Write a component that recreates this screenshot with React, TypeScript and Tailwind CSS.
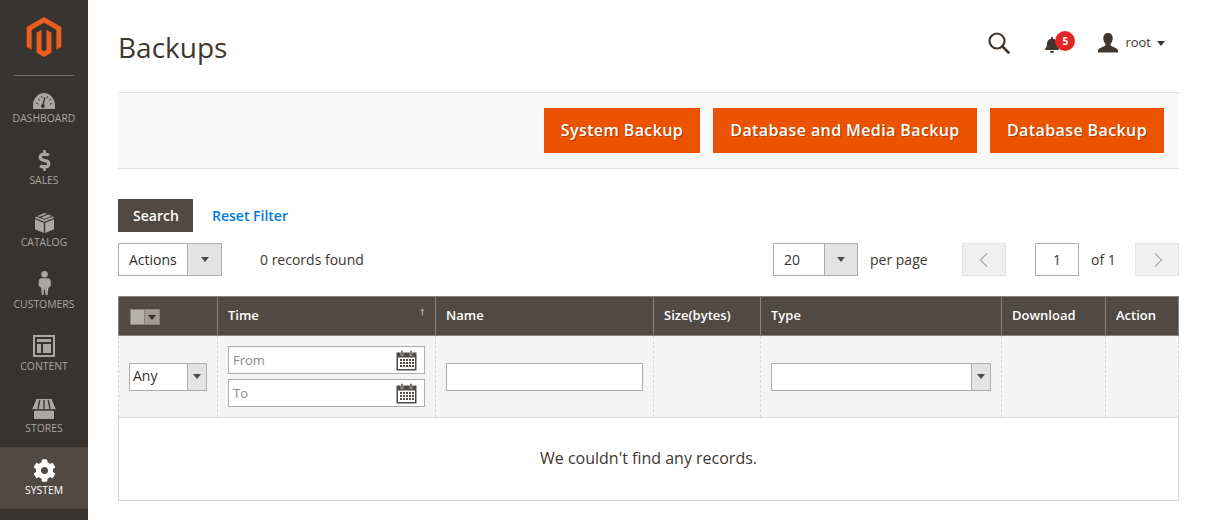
import type { ReactNode } from "react";
import { FaBell, FaCog, FaDollarSign } from "react-icons/fa";
import { SiMagento } from "react-icons/si";

const DashboardIcon = () => (
  <svg width="22" height="16" viewBox="0 0 24 16" fill="currentColor" preserveAspectRatio="none">
    <path fillRule="evenodd" d="M12 0C5.400 0 0 5.500 0 12.500V16h24v-3.500C24 5.500 18.600 0 12 0zM13.600 4.500l-1.700 7a1.900 1.900 0 1 1-1.600-.3l1.900-7z" />
    <g stroke="#373330" strokeWidth="1" strokeLinecap="round">
      <path d="M4 10.500l1.500.4M5.900 6l1.200 1M9.500 3.300l.5 1.400M15.800 3.600l-.6 1.300M19.200 6.400l-1.200 1M20.300 10.600l-1.500.4" />
    </g>
  </svg>
);

const CatalogIcon = () => (
  <svg width="19" height="20" viewBox="0 0 20 21" fill="currentColor">
    <path d="M0 6.600l9.300 3.600V21L0 17.100zM20 6.600l-9.300 3.600V21l9.300-3.900z" />
    <path d="M10 0l2.600 1-7.600 3-2.800-1zM14 1.600l3.800 1.500-7.800 3-3.600-1.400zM19 3.600L10 7.200 1 3.600l-1 1.600 10 4 10-4z" />
  </svg>
);

const CustomersIcon = () => (
  <svg width="13" height="24" viewBox="0 0 13 24" fill="currentColor">
    <circle cx="6.500" cy="3.300" r="3.300" />
    <path d="M3.400 7.200h6.200c1.900 0 3 1.200 3.100 3l.3 4.300-1.900 1.700-.9 1.300-.5 6.500H7.500l-.5-5.500H6L5.500 24H3.800l-.5-6.500-.9-1.300L.5 14.500l.3-4.300c.1-1.800 1.200-3 2.600-3z" />
  </svg>
);

const ContentIcon = () => (
  <svg width="22" height="22" viewBox="0 0 22 22" fill="currentColor">
    <path fillRule="evenodd" d="M0 0h22v22H0zM2 2v18h18V2z" />
    <path d="M4 4h14v3H4zM4 9h4v9H4zM10 9h8v9h-8z" />
  </svg>
);

const StoresIcon = () => (
  <svg width="24" height="20" viewBox="0 0 24 20" fill="currentColor">
    <path d="M4.500 0h15L24 10.500H0zM2 11.500h20V20H2z" />
    <path d="M7.800 1L6 10M12 1v9M16.200 1L18 10" stroke="#373330" strokeWidth="1.300" />
    <path d="M0 10.800h24" stroke="#373330" strokeWidth="1" />
  </svg>
);

const UserIcon = () => (
  <svg width="20" height="20" viewBox="0 0 20 20" fill="#41362f" className="mr-[7px]">
    <path d="M10 0c3 0 4.700 2.200 4.700 5.300 0 2.200-.8 4.300-2.100 5.400v1.500c.6 1.400 6.400 2.400 7.400 5.100V19.500H0V17.300c1-2.700 6.800-3.700 7.400-5.100v-1.500C6.100 9.600 5.300 7.500 5.300 5.300 5.300 2.200 7 0 10 0z" />
  </svg>
);

const navItems: { label: string; icon: ReactNode; active?: boolean }[] = [
  { label: "DASHBOARD", icon: <DashboardIcon /> },
  { label: "SALES", icon: <FaDollarSign size={21} /> },
  { label: "CATALOG", icon: <CatalogIcon /> },
  { label: "CUSTOMERS", icon: <CustomersIcon /> },
  { label: "CONTENT", icon: <ContentIcon /> },
  { label: "STORES", icon: <StoresIcon /> },
  { label: "SYSTEM", icon: <FaCog size={23} className="mb-[-1px]" />, active: true },
];

const Caret = ({ className = "border-t-[#514943]" }: { className?: string }) => (
  <span className={`h-0 w-0 border-x-[4px] border-t-[5px] border-x-transparent ${className}`} />
);

const CalendarIcon = () => (
  <svg width="21" height="21" viewBox="0 0 21 21" className="absolute right-[7px] top-[3px]">
    <rect x="0.500" y="2.500" width="20" height="18" fill="#514943" />
    <rect x="2" y="7.500" width="17" height="11.500" fill="#fff" />
    <rect x="5" y="0.500" width="2" height="5" fill="#514943" stroke="#fff" strokeWidth="0.500" />
    <rect x="14" y="0.500" width="2" height="5" fill="#514943" stroke="#fff" strokeWidth="0.500" />
    <g fill="#514943">
      {[9, 12, 15].map((y) =>
        [4, 7, 10, 13, 16].map((x) => <rect key={`${x}-${y}`} x={x} y={y} width="2" height="2" />),
      )}
    </g>
  </svg>
);

const DateField = ({ placeholder }: { placeholder: string }) => (
  <div className="relative flex h-[28px] w-[197px] items-center border border-[#adadad] bg-white pl-[4px] pt-[2px] text-[13px] text-[#8a8a8a]">
    {placeholder}
    <CalendarIcon />
  </div>
);

const Select = ({ label, width, arrow, height, pad }: { label: string; width: string; arrow: string; height: string; pad: string }) => (
  <div className={`flex border border-[#adadad] bg-white text-[14px] text-[#303030] ${width} ${height}`}>
    <span className={`flex flex-1 items-center ${pad}`}>{label}</span>
    <span className={`flex items-center justify-center border-l border-[#adadad] bg-[#e3e3e3] ${arrow}`}>
      <Caret />
    </span>
  </div>
);

const OrangeButton = ({ children, width }: { children: ReactNode; width: string }) => (
  <button className={`h-[45px] bg-[#eb5202] pb-[2px] text-[16px] font-semibold tracking-[0.4px] text-white [text-shadow:1px_1px_0_rgba(0,0,0,0.25)] ${width}`}>
    {children}
  </button>
);

const headers = ["Time", "Name", "Size(bytes)", "Type", "Download", "Action"];

export default function App() {
  return (
    <div className="flex h-[520px] w-[1206px] overflow-hidden bg-white font-['Open_Sans',sans-serif] text-[#303030]">
      <aside className="flex w-[88px] shrink-0 flex-col bg-[#373330]">
        <div className="flex h-[75px] justify-center pt-[17px] text-[#eb5e20]">
          <SiMagento size={40} />
        </div>
        <div className="mx-[14px] -mb-px h-px bg-[#736e69]" />
        <nav className="flex flex-col">
          {navItems.map((item) => (
            <div
              key={item.label}
              className={`flex h-[62px] flex-col items-center ${item.active ? "bg-[#514943] text-white" : "text-[#aaa6a0]"}`}
            >
              <div className="flex h-[36px] items-end justify-center pb-[2px]">{item.icon}</div>
              <span className="text-[10.4px] leading-[14px]">{item.label}</span>
            </div>
          ))}
        </nav>
      </aside>

      <main className="w-[1091px] pl-[30px]">
        <header className="flex h-[92px] items-start justify-between pt-[26px]">
          <h1 className="text-[28px] font-normal leading-[42px] text-[#41362f]">Backups</h1>
          <div className="flex items-center pr-[14px] pt-[6px] text-[#41362f]">
            <svg width="22" height="22" viewBox="0 0 22 22" fill="none" stroke="#41362f" strokeWidth="2.200" className="mr-[34px]">
              <circle cx="9" cy="9" r="7.500" />
              <path d="M14.500 14.500l6 6" strokeLinecap="round" strokeWidth="2.600" />
            </svg>
            <div className="relative mr-[33px] h-[22px] w-[21px]">
              <FaBell size={16} className="absolute left-0 top-[5px]" />
              <span className="absolute left-[11px] top-[-1px] flex h-[20px] w-[20px] items-center justify-center rounded-full bg-[#e22626] text-[10px] font-bold text-white">
                5
              </span>
            </div>
            <UserIcon />
            <span className="mr-[6px] text-[13px]">root</span>
            <Caret className="border-t-[#41362f]" />
          </div>
        </header>

        <div className="flex h-[77px] items-center justify-end gap-[13px] border-y border-[#e3e3e3] bg-[#f8f8f8] pr-[15px]">
          <OrangeButton width="w-[156px]">System Backup</OrangeButton>
          <OrangeButton width="w-[264px]">Database and Media Backup</OrangeButton>
          <OrangeButton width="w-[174px]">Database Backup</OrangeButton>
        </div>

        <div className="mt-[30px] flex h-[33px] items-center gap-[19px]">
          <button className="h-[33px] w-[75px] bg-[#514943] pl-[1px] text-[14px] font-semibold text-white">Search</button>
          <span className="text-[14px] font-semibold text-[#007bdb]">Reset Filter</span>
        </div>

        <div className="mt-[11px] flex h-[33px] items-center text-[14px] text-[#41362f]">
          <Select label="Actions" width="w-[104px]" height="h-[33px]" arrow="w-[34px]" pad="pl-[10px]" />
          <span className="ml-[38px]">0 records found</span>
          <div className="ml-auto flex items-center">
            <Select label="20" width="w-[85px]" height="h-[33px]" arrow="w-[33px]" pad="pl-[10px]" />
            <span className="ml-[12px] w-[92px]">per page</span>
            <span className="flex h-[33px] w-[44px] items-center justify-center border border-[#e3e3e3] bg-[#f0f0f0]">
              <svg width="11" height="16" viewBox="0 0 11 16" fill="none" stroke="#b5b0ab" strokeWidth="1.500"><path d="M8 1.500L1.500 8 8 14.500" /></svg>
            </span>
            <span className="ml-[29px] flex h-[33px] w-[44px] items-center justify-center border border-[#adadad]">1</span>
            <span className="ml-[12px] w-[44px]">of 1</span>
            <span className="flex h-[33px] w-[44px] items-center justify-center border border-[#e3e3e3] bg-[#f0f0f0]">
              <svg width="11" height="16" viewBox="0 0 11 16" fill="none" stroke="#b5b0ab" strokeWidth="1.500"><path d="M3 1.500L9.500 8 3 14.500" /></svg>
            </span>
          </div>
        </div>

        <table className="mt-[20px] w-[1060px] table-fixed border-collapse text-[13px]">
          <colgroup>
            <col className="w-[99px]" />
            <col className="w-[218px]" />
            <col className="w-[218px]" />
            <col className="w-[107px]" />
            <col className="w-[241px]" />
            <col className="w-[104px]" />
            <col className="w-[73px]" />
          </colgroup>
          <thead>
            <tr className="h-[39px] bg-[#514943] text-left text-white">
              <th className="border border-[#8a837e] pl-[11px] font-semibold">
                <span className="mt-[2px] flex h-[16px] w-[30px]">
                  <span className="w-[15px] border border-[#8a837e] bg-[#b5b1ad]" />
                  <span className="flex flex-1 items-center justify-center border-y border-r border-[#8a837e] bg-[#a09b96]">
                    <Caret className="border-t-[#373330]" />
                  </span>
                </span>
              </th>
              {headers.map((h) => (
                <th key={h} className="relative border border-[#8a837e] pl-[10px] font-semibold">
                  {h}
                  {h === "Time" && <span className="absolute right-[10px] top-[6px] text-[11px] font-normal leading-[16px]">↑</span>}
                </th>
              ))}
            </tr>
          </thead>
          <tbody>
            <tr className="h-[82px] bg-[#f4f4f4]">
              <td className="border border-dashed border-[#d6d6d6] pl-[10px]">
                <Select label="Any" width="w-[78px]" height="h-[28px]" arrow="w-[19px]" pad="pb-[2px] pl-[3px]" />
              </td>
              <td className="border border-dashed border-[#d6d6d6] pl-[10px]">
                <div className="flex flex-col gap-[5px]">
                  <DateField placeholder="From" />
                  <DateField placeholder="To" />
                </div>
              </td>
              <td className="border border-dashed border-[#d6d6d6] pl-[10px]">
                <div className="h-[28px] w-[197px] border border-[#adadad] bg-white" />
              </td>
              <td className="border border-dashed border-[#d6d6d6]" />
              <td className="border border-dashed border-[#d6d6d6] pl-[10px]">
                <Select label="" width="w-[220px]" height="h-[28px]" arrow="w-[19px]" pad="" />
              </td>
              <td className="border border-dashed border-[#d6d6d6]" />
              <td className="border border-dashed border-[#d6d6d6]" />
            </tr>
            <tr className="h-[83px]">
              <td colSpan={7} className="border border-[#d6d6d6] pb-[2px] text-center text-[16px] text-[#41362f]">
                We couldn't find any records.
              </td>
            </tr>
          </tbody>
        </table>
      </main>
    </div>
  );
}
